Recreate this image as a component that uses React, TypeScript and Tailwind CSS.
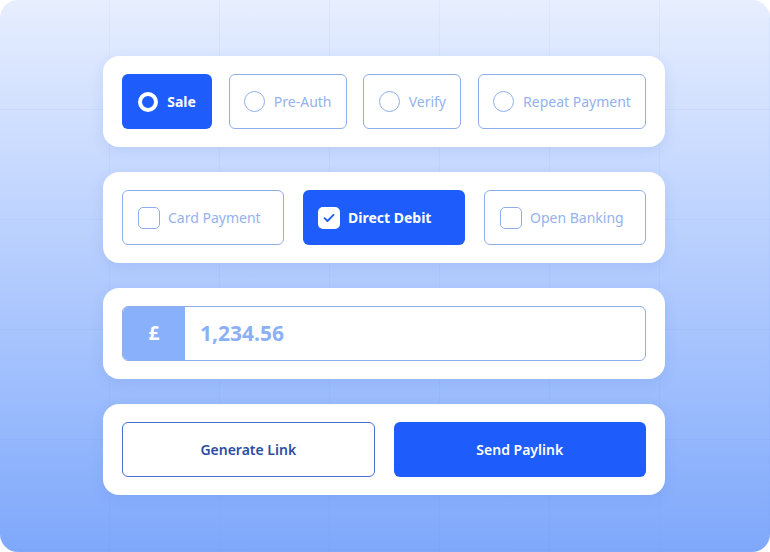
import { useState } from "react";

const TYPES = [
  { id: "sale", label: "Sale", width: "w-[90px]" },
  { id: "preauth", label: "Pre-Auth", width: "w-[118px]" },
  { id: "verify", label: "Verify", width: "w-[98px]" },
  { id: "repeat", label: "Repeat Payment", width: "w-[168px]" },
];

const METHODS = [
  { id: "card", label: "Card Payment" },
  { id: "dd", label: "Direct Debit" },
  { id: "ob", label: "Open Banking" },
];

function Radio({ checked }: { checked: boolean }) {
  if (checked) {
    return (
      <span className="box-border h-[20px] w-[20px] shrink-0 rounded-full border-[4px] border-white" />
    );
  }
  return (
    <span className="box-border h-[21px] w-[21px] shrink-0 rounded-full border-[1.5px] border-[#8eaee9]" />
  );
}

function Checkbox({ checked }: { checked: boolean }) {
  if (checked) {
    return (
      <span className="flex h-[22px] w-[22px] shrink-0 items-center justify-center rounded-[5px] bg-white">
        <svg width="12" height="10" viewBox="0 0 12 10" fill="none">
          <path
            d="M1.5 5.2 4.5 8 10.5 1.8"
            stroke="#1e5dfb"
            strokeWidth="1.8"
            strokeLinecap="round"
            strokeLinejoin="round"
          />
        </svg>
      </span>
    );
  }
  return (
    <span className="box-border h-[22px] w-[22px] shrink-0 rounded-[5px] border-[1.5px] border-[#8eaee9]" />
  );
}

function Card({ children }: { children: React.ReactNode }) {
  return (
    <div className="rounded-2xl bg-white px-[19px] py-[18px] shadow-[0_4px_14px_rgba(60,100,200,0.12)]">
      {children}
    </div>
  );
}

export default function App() {
  const [type, setType] = useState("sale");
  const [method, setMethod] = useState("dd");

  return (
    <div
      className="h-[552px] w-[770px] bg-white"
      style={{ fontFamily: '"Noto Sans", "Open Sans", sans-serif' }}
    >
      <div className="relative h-full w-full overflow-hidden rounded-[18px] bg-gradient-to-b from-[#e7eefe] to-[#7fa8fb]">
        <div className="absolute inset-0 bg-[linear-gradient(to_right,rgba(90,130,220,0.07)_1px,transparent_1px),linear-gradient(to_bottom,rgba(90,130,220,0.07)_1px,transparent_1px)] bg-[size:110px_110px] bg-[position:-1px_-1px]" />

        <div className="relative ml-[103px] flex w-[562px] flex-col gap-[25px] pt-[56px]">
          <Card>
            <div className="flex justify-between">
              {TYPES.map((t) => {
                const on = t.id === type;
                return (
                  <button
                    key={t.id}
                    type="button"
                    onClick={() => setType(t.id)}
                    className={`flex h-[55px] ${t.width} items-center justify-center gap-[9px] whitespace-nowrap rounded-[6px] text-[14px] ${
                      on
                        ? "bg-[#1e5dfb] font-bold text-white"
                        : "border border-[#8eaee9] text-[#93b2ee]"
                    }`}
                  >
                    <Radio checked={on} />
                    <span>{t.label}</span>
                  </button>
                );
              })}
            </div>
          </Card>

          <Card>
            <div className="grid grid-cols-3 gap-[19px]">
              {METHODS.map((m) => {
                const on = m.id === method;
                return (
                  <button
                    key={m.id}
                    type="button"
                    onClick={() => setMethod(m.id)}
                    className={`flex h-[55px] items-center gap-[8px] whitespace-nowrap rounded-[6px] px-[15px] text-[14px] ${
                      on
                        ? "bg-[#1e5dfb] font-bold text-white"
                        : "border border-[#8eaee9] text-[#93b2ee]"
                    }`}
                  >
                    <Checkbox checked={on} />
                    <span>{m.label}</span>
                  </button>
                );
              })}
            </div>
          </Card>

          <Card>
            <div className="flex h-[55px] overflow-hidden rounded-[6px] border border-[#8eaee9]">
              <div className="flex w-[62px] items-center justify-center bg-[#89b0fa] text-[19px] font-bold text-white">
                £
              </div>
              <div className="flex flex-1 items-center px-[15px] text-[21px] font-bold text-[#8cb0f5]">
                1,234.56
              </div>
            </div>
          </Card>

          <Card>
            <div className="grid grid-cols-2 gap-[19px]">
              <button
                type="button"
                className="h-[55px] rounded-[6px] border border-[#4a6fd0] text-[14px] font-semibold text-[#2e4da2]"
              >
                Generate Link
              </button>
              <button
                type="button"
                className="h-[55px] rounded-[6px] bg-[#1e5dfb] text-[14px] font-semibold text-white"
              >
                Send Paylink
              </button>
            </div>
          </Card>
        </div>
      </div>
    </div>
  );
}
